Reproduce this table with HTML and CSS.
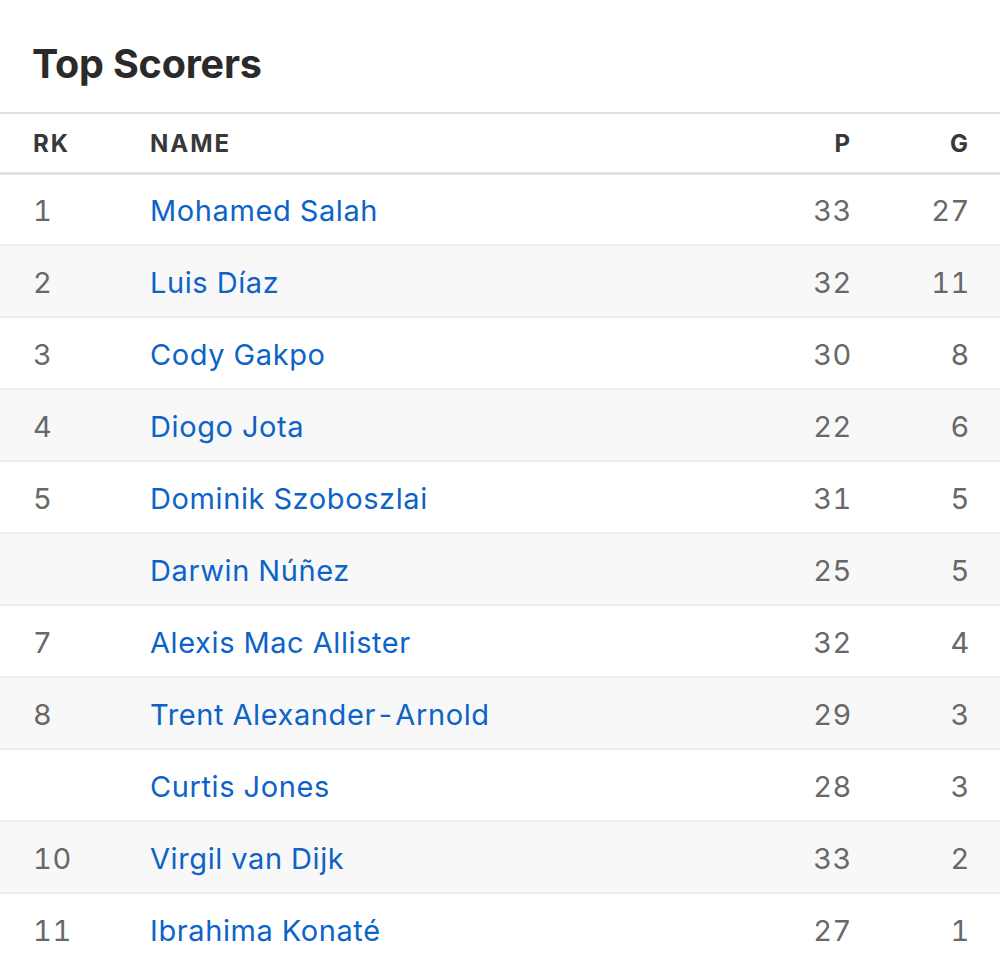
FILE: index.html
```html
<!DOCTYPE html>
<html lang="en">
<head>
<meta charset="utf-8">
<title>Top Scorers</title>
<link rel="stylesheet" href="styles.css">
</head>
<body>
<section class="card">
  <h1 class="title">Top Scorers</h1>
  <div class="table">
    <div class="row head">
      <span class="rk">RK</span><span class="name">NAME</span><span class="num">P</span><span class="num">G</span>
    </div>
    <div class="row"><span class="rk">1</span><a class="name" href="#">Mohamed Salah</a><span class="num">33</span><span class="num">27</span></div>
    <div class="row alt"><span class="rk">2</span><a class="name" href="#">Luis Díaz</a><span class="num">32</span><span class="num">11</span></div>
    <div class="row"><span class="rk">3</span><a class="name" href="#">Cody Gakpo</a><span class="num">30</span><span class="num">8</span></div>
    <div class="row alt"><span class="rk">4</span><a class="name" href="#">Diogo Jota</a><span class="num">22</span><span class="num">6</span></div>
    <div class="row"><span class="rk">5</span><a class="name" href="#">Dominik Szoboszlai</a><span class="num">31</span><span class="num">5</span></div>
    <div class="row alt"><span class="rk"></span><a class="name" href="#">Darwin Núñez</a><span class="num">25</span><span class="num">5</span></div>
    <div class="row"><span class="rk">7</span><a class="name" href="#">Alexis Mac Allister</a><span class="num">32</span><span class="num">4</span></div>
    <div class="row alt"><span class="rk">8</span><a class="name" href="#">Trent Alexander-Arnold</a><span class="num">29</span><span class="num">3</span></div>
    <div class="row"><span class="rk"></span><a class="name" href="#">Curtis Jones</a><span class="num">28</span><span class="num">3</span></div>
    <div class="row alt"><span class="rk">10</span><a class="name" href="#">Virgil van Dijk</a><span class="num">33</span><span class="num">2</span></div>
    <div class="row"><span class="rk">11</span><a class="name" href="#">Ibrahima Konaté</a><span class="num">27</span><span class="num">1</span></div>
  </div>
</section>
</body>
</html>
```
FILE: styles.css
```css
html, body {
  margin: 0;
  padding: 0;
  background: #ffffff;
}
body {
  font-family: Inter, "Noto Sans", "Liberation Sans", sans-serif;
  color: #333;
}
.card {
  width: 1000px;
}
.title {
  margin: 0;
  height: 112px;
  box-sizing: border-box;
  padding: 40px 0 0 32px;
  font-size: 39.5px;
  line-height: 48px;
  font-weight: 700;
  color: #2a2a2a;
  letter-spacing: -0.2px;
}
.table {
  border-top: 2px solid #e2e2e2;
}
.row {
  display: grid;
  grid-template-columns: 117px 1fr 100px 118px;
  align-items: center;
  height: 70px;
  padding: 2px 32px 0 33px;
  box-sizing: content-box;
  border-bottom: 2px solid #ececec;
  font-size: 29px;
  letter-spacing: 0.6px;
  color: #686868;
  font-variant-numeric: tabular-nums;
}
.row:not(.head) {
  height: 68px;
}
.row:not(.head) .num {
  margin-right: -2px;
}
.row.alt {
  background: #f8f8f8;
}
.row.head {
  height: 57px;
  padding-top: 1px;
  border-bottom: 3px solid #e2e2e2;
  font-size: 24px;
  font-weight: 700;
  color: #383838;
  letter-spacing: 2px;
}
.row:nth-child(2) {
  height: 67px;
}
.name {
  color: #0d63c6;
  text-decoration: none;
}
.head .name {
  color: #383838;
}
.num {
  text-align: right;
}
.head .num {
  letter-spacing: 0;
}
```
